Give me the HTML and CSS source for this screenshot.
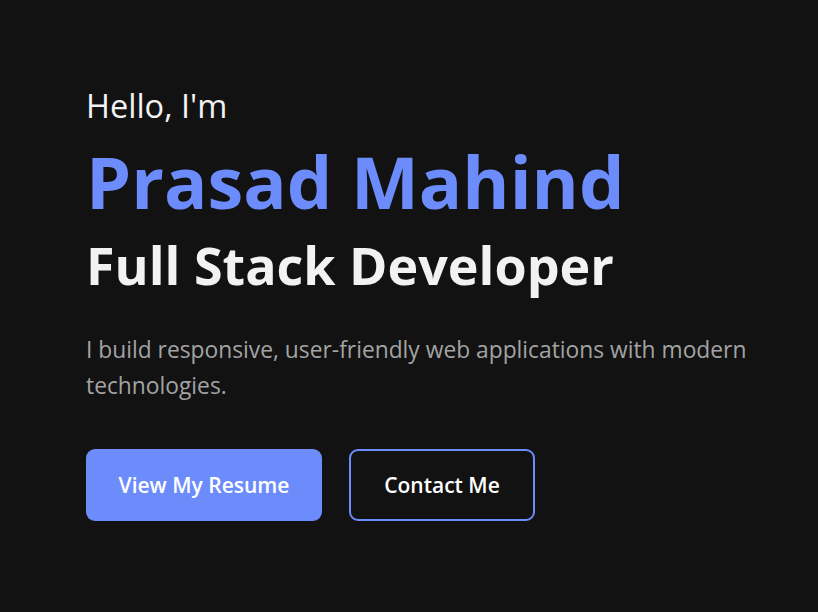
FILE: index.html
```html
<!DOCTYPE html>
<html lang="en">
<head>
<meta charset="utf-8">
<title>Prasad Mahind</title>
<link rel="stylesheet" href="styles.css">
</head>
<body>
<section class="hero">
  <p class="greeting">Hello, I'm</p>
  <h1 class="name">Prasad Mahind</h1>
  <h2 class="role">Full Stack Developer</h2>
  <p class="intro">I build responsive, user-friendly web applications with modern technologies.</p>
  <div class="actions">
    <a class="btn btn-primary" href="#">View My Resume</a>
    <a class="btn btn-outline" href="#">Contact Me</a>
  </div>
</section>
</body>
</html>
```
FILE: styles.css
```css
html, body {
  margin: 0;
  padding: 0;
  background: #121212;
  height: 100%;
}
body {
  font-family: "Open Sans", "Noto Sans", sans-serif;
  color: #f2f2f2;
}
.hero {
  display: flex;
  flex-direction: column;
  align-items: flex-start;
  padding: 84px 40px 0 86px;
}
.greeting {
  margin: 0;
  font-size: 32.5px;
  font-weight: 400;
  line-height: 44px;
}
.name {
  margin: 8px 0 0;
  font-size: 72px;
  font-weight: 700;
  line-height: 90px;
  color: #6c8cfb;
}
.role {
  margin: 4px 0 0;
  font-size: 52px;
  font-weight: 700;
  line-height: 70px;
}
.intro {
  margin: 32px 0 0;
  max-width: 690px;
  font-size: 22.8px;
  line-height: 36px;
  color: #a3a3a3;
}
.actions {
  display: flex;
  gap: 27px;
  margin-top: 45px;
}
.btn {
  box-sizing: border-box;
  display: flex;
  align-items: center;
  justify-content: center;
  height: 72px;
  border-radius: 9px;
  font-size: 21px;
  font-weight: 600;
  color: #ffffff;
  text-decoration: none;
}
.btn-primary {
  width: 236px;
  background: #6c8cfb;
}
.btn-outline {
  width: 186px;
  border: 2px solid #6c8cfb;
  background: transparent;
}
```
